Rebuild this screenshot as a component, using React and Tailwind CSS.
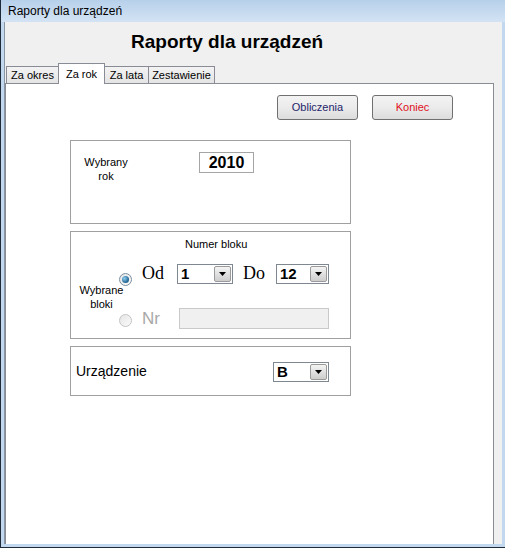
import { useState } from "react";

const ui = "font-['Liberation_Sans',Arial,sans-serif]";

// small dropdown like the old WinForms combo
const Combo = ({ value, width }) => (
  <div
    className={`flex h-[20px] items-center justify-between border border-[#7f8790] bg-white pl-[3px] pr-[1px] ${width}`}
  >
    <span className="text-[15px] font-bold leading-none text-black">{value}</span>
    <div className="flex h-[16px] w-[17px] items-center justify-center rounded-[2px] border border-[#9a9a9a] bg-gradient-to-b from-[#f4f4f4] to-[#cdcdcd]">
      <svg width="7" height="4" viewBox="0 0 7 4">
        <path d="M0 0h7L3.5 4z" fill="#000" />
      </svg>
    </div>
  </div>
);

const Radio = ({ checked }) => (
  <div
    className={`flex h-[13px] w-[13px] items-center justify-center rounded-full border ${
      checked ? "border-[#7a8ea0]" : "border-[#c4c4c4]"
    } bg-gradient-to-br from-[#e6e6e6] to-[#fafafa]`}
  >
    {checked && (
      <div className="h-[7px] w-[7px] rounded-full bg-[radial-gradient(circle_at_35%_35%,#8fd0f0,#1d5f8f_70%)]" />
    )}
  </div>
);

const tabs = [
  { label: "Za okres", w: "w-[53px]" },
  { label: "Za rok", w: "w-[47px]" },
  { label: "Za lata", w: "w-[45px]" },
  { label: "Zestawienie", w: "w-[67px]" },
];

export default function App() {
  const [tab, setTab] = useState(1);

  return (
    <div className={`flex h-[548px] w-[505px] flex-col border-b border-l border-[#1e2a38] bg-[#c2d8ef] ${ui}`}>
      {/* title bar */}
      <div className="flex h-[22px] items-center bg-gradient-to-b from-[#b7d0ea] to-[#d3e3f4] pl-[7px] text-[12px] text-black">
        Raporty dla urządzeń
      </div>

      <div className="mb-[3px] ml-[3px] mr-[3px] flex flex-1 flex-col border-l border-[#8a96a3] bg-[#f0f0f0]">
        <h1 className="ml-[126px] mt-[8px] text-[19px] font-bold leading-[24px] text-black">
          Raporty dla urządzeń
        </h1>

        {/* tabs */}
        <div className="ml-[1px] mt-[9px] flex items-end text-[11px] text-black">
          {tabs.map((t, i) =>
            i === tab ? (
              <div
                key={t.label}
                className={`relative z-10 -mb-px -ml-px flex h-[21px] justify-center border border-b-0 border-[#898c95] bg-white pt-[2px] ${t.w}`}
              >
                {t.label}
              </div>
            ) : (
              <div
                key={t.label}
                onClick={() => setTab(i)}
                className={`-ml-px flex h-[17px] cursor-default items-center justify-center border border-b-0 border-[#898c95] bg-gradient-to-b from-[#f3f3f3] to-[#e4e4e4] first:ml-0 ${t.w}`}
              >
                {t.label}
              </div>
            )
          )}
        </div>

        {/* tab page */}
        <div className="mr-[8px] flex flex-1 flex-col border border-b-0 border-[#898c95] bg-white">
          <div className="ml-[271px] mt-[11px] flex gap-[14px] text-[11px]">
            <button className="h-[25px] w-[81px] rounded-[3px] border border-[#707070] bg-gradient-to-b from-[#f3f3f3] via-[#ebebeb] to-[#dcdcdc] text-[#1f1f6b]">
              Obliczenia
            </button>
            <button className="h-[25px] w-[81px] rounded-[3px] border border-[#707070] bg-gradient-to-b from-[#f3f3f3] via-[#ebebeb] to-[#dcdcdc] text-[#e0101c]">
              Koniec
            </button>
          </div>

          <div className="ml-[64px] mt-[20px] flex w-[281px] flex-col gap-[7px]">
            {/* year */}
            <div className="flex h-[84px] items-start border border-[#a0a0a0] pt-[11px]">
              <div className="mt-[3px] w-[70px] text-center text-[11px] leading-[14px] text-black">
                Wybrany
                <br />
                rok
              </div>
              <div className="ml-[58px] flex h-[21px] w-[55px] items-center justify-center border border-[#a5a5a5] text-[16px] font-bold text-black">
                2010
              </div>
            </div>

            {/* blocks */}
            <div className="flex h-[108px] flex-col border border-[#a0a0a0]">
              <div className="ml-[114px] mt-[5px] text-[11px] leading-[14px] text-black">Numer bloku</div>
              <div className="flex">
                <div className="mt-[32px] w-[61px] text-center text-[11px] leading-[14px] text-black">
                  Wybrane
                  <br />
                  bloki
                </div>
                <div className="flex flex-col">
                  <div className="mt-[9px] flex items-center">
                    <div className="mt-[12px] -ml-[13px]">
                      <Radio checked />
                    </div>
                    <span className="ml-[10px] w-[35px] font-['Liberation_Serif',serif] text-[18px] text-black">Od</span>
                    <Combo value="1" width="w-[56px]" />
                    <span className="ml-[10px] w-[33px] font-['Liberation_Serif',serif] text-[18px] text-black">Do</span>
                    <Combo value="12" width="w-[53px]" />
                  </div>
                  <div className="mt-[19px] flex items-center">
                    <div className="mt-[4px] -ml-[13px]">
                      <Radio />
                    </div>
                    <span className="ml-[10px] w-[37px] text-[17px] text-[#a8a8a8]">Nr</span>
                    <div className="h-[21px] w-[150px] border border-[#c9c9c9] bg-[#f0f0f0]" />
                  </div>
                </div>
              </div>
            </div>

            {/* device */}
            <div className="flex h-[50px] items-center border border-[#a0a0a0] pl-[5px] pt-[1px]">
              <span className="w-[197px] text-[14px] text-black">Urządzenie</span>
              <Combo value="B" width="w-[56px]" />
            </div>
          </div>
        </div>
      </div>
    </div>
  );
}
